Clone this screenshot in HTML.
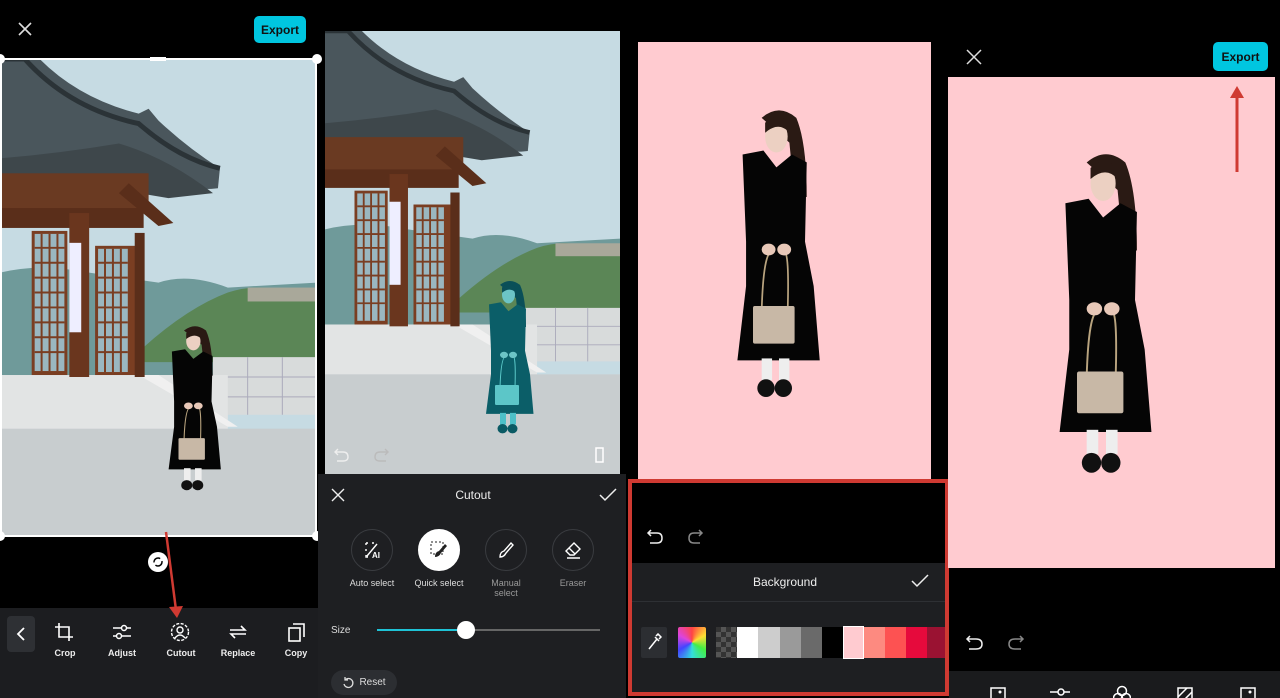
<!DOCTYPE html>
<html><head><meta charset="utf-8">
<style>
*{margin:0;padding:0;box-sizing:border-box}
body{width:1280px;height:698px;background:#000;position:relative;overflow:hidden;font-family:"Liberation Sans",sans-serif;color:#fff}
.a{position:absolute}
.btn{background:#00c6e0;color:#111;font-weight:bold;font-size:12px;border-radius:5px;display:flex;align-items:center;justify-content:center}
.lbl{font-size:9px;color:#ddd;text-align:center;width:70px}
.tb{font-size:9px;font-weight:bold;text-align:center;width:60px;color:#eee}
.circ{width:42px;height:42px;border-radius:50%;border:1px solid #3a3c40;display:flex;align-items:center;justify-content:center}
</style></head><body>
<svg width="0" height="0" style="position:absolute">
<defs>
<symbol id="scene" viewBox="0 0 320 480" preserveAspectRatio="none">
<rect width="320" height="480" fill="#c6dbe3"/>
<path d="M0 215 Q40 205 90 215 L160 225 Q190 215 230 230 L320 225 L320 320 L0 320Z" fill="#6f9a9a"/>
<path d="M145 290 Q190 250 230 235 Q260 225 290 235 L320 240 L320 305 L145 305Z" fill="#5b8656"/>
<rect x="250" y="230" width="70" height="14" fill="#a9a89a"/>
<rect x="215" y="300" width="105" height="58" fill="#d8dbdb"/>
<path d="M215 320 H320 M215 340 H320 M250 300 V358 M285 300 V358" stroke="#aab" stroke-width="1"/>
<rect x="0" y="318" width="230" height="58" fill="#e2e4e4"/>
<path d="M140 318 L230 370 L240 370 L160 318Z" fill="#f0f0f0"/>
<rect x="0" y="372" width="320" height="108" fill="#c8cdcf"/>
<path d="M0 0 L40 0 Q80 40 140 55 L150 50 L160 62 Q190 90 222 110 L220 130 Q180 135 140 110 L0 115Z" fill="#4a565c"/>
<path d="M0 0 L25 0 Q70 50 140 65 Q180 100 222 110" stroke="#2b3337" stroke-width="5" fill="none"/>
<path d="M0 100 Q60 95 120 85 Q170 100 215 135 L170 140 L140 135 L0 130Z" fill="#3e474b"/>
<rect x="0" y="115" width="150" height="40" fill="#6a3a22"/>
<path d="M130 125 L175 165 L160 168 L120 135Z" fill="#5a2e1a"/>
<rect x="0" y="150" width="145" height="20" fill="#5a2e1a"/>
<rect x="32" y="173" width="36" height="145" fill="#7a3e22"/>
<rect x="35" y="176" width="30" height="138" fill="#9ab7c0"/>
<g stroke="#7a3e22" stroke-width="2"><path d="M35 190H65M35 205H65M35 220H65M35 235H65M35 250H65M35 265H65M35 280H65M35 295H65M42 176V314M50 176V314M58 176V314"/></g>
<rect x="70" y="155" width="20" height="165" fill="#6a361e"/>
<rect x="70" y="185" width="12" height="90" fill="#eef"/>
<rect x="96" y="188" width="44" height="130" fill="#7a3e22"/>
<rect x="99" y="191" width="30" height="124" fill="#9ab7c0"/>
<g stroke="#7a3e22" stroke-width="2"><path d="M99 205H129M99 220H129M99 235H129M99 250H129M99 265H129M99 280H129M99 295H129M106 191V315M114 191V315M122 191V315"/></g>
<rect x="136" y="175" width="10" height="145" fill="#5a2e1a"/>
</symbol>
<symbol id="girl" viewBox="0 0 120 300" preserveAspectRatio="none">
<path d="M40 15 Q60 0 80 15 Q92 40 92 95 L78 95 L72 40Z" fill="#2a1a14"/>
<ellipse cx="57" cy="34" rx="13" ry="16" fill="#ecd0c2"/>
<path d="M44 20 Q57 8 72 20 L72 30 Q60 18 44 30Z" fill="#2a1a14"/>
<path d="M18 52 L42 48 L57 65 L75 52 L92 60 L90 140 L100 185 L107 260 L12 260 L22 185 L22 140Z" fill="#050505"/>
<rect x="40" y="258" width="12" height="22" fill="#eee"/>
<rect x="60" y="258" width="12" height="22" fill="#eee"/>
<ellipse cx="45" cy="288" rx="10" ry="9" fill="#111"/>
<ellipse cx="65" cy="288" rx="10" ry="9" fill="#111"/>
<path d="M40 210 Q42 150 52 150 M66 150 Q72 150 70 210" stroke="#b9a47f" stroke-width="2" fill="none"/>
<rect x="30" y="205" width="48" height="38" rx="2" fill="#c8b8a6"/>
<ellipse cx="48" cy="148" rx="8" ry="6" fill="#e8c8b8"/>
<ellipse cx="66" cy="148" rx="8" ry="6" fill="#e8c8b8"/>
</symbol>
<symbol id="girlt" viewBox="0 0 120 300" preserveAspectRatio="none">
<path d="M40 15 Q60 0 80 15 Q92 40 92 95 L78 95 L72 40Z" fill="#0a4f58"/>
<ellipse cx="57" cy="34" rx="13" ry="16" fill="#6cc4c6"/>
<path d="M44 20 Q57 8 72 20 L72 30 Q60 18 44 30Z" fill="#0a4f58"/>
<path d="M18 52 L42 48 L57 65 L75 52 L92 60 L90 140 L100 185 L107 260 L12 260 L22 185 L22 140Z" fill="#0b5e68"/>
<rect x="40" y="258" width="12" height="22" fill="#4dc0c8"/>
<rect x="60" y="258" width="12" height="22" fill="#4dc0c8"/>
<ellipse cx="45" cy="288" rx="10" ry="9" fill="#0a5a64"/>
<ellipse cx="65" cy="288" rx="10" ry="9" fill="#0a5a64"/>
<path d="M40 210 Q42 150 52 150 M66 150 Q72 150 70 210" stroke="#5ccaca" stroke-width="2" fill="none"/>
<rect x="30" y="205" width="48" height="38" rx="2" fill="#5cc6c8"/>
<ellipse cx="48" cy="148" rx="8" ry="6" fill="#6cc4c6"/>
<ellipse cx="66" cy="148" rx="8" ry="6" fill="#6cc4c6"/>
</symbol>
</defs>
</svg>

<!-- Panel 1 -->
<svg class="a" style="left:16px;top:20px" width="18" height="18" viewBox="0 0 18 18"><path d="M3 3L15 15M15 3L3 15" stroke="#ddd" stroke-width="1.6"/></svg>
<div class="a btn" style="left:254px;top:16px;width:52px;height:27px">Export</div>
<svg class="a" style="left:0;top:59px" width="317" height="477"><use href="#scene" width="317" height="477"/><use href="#girl" x="162" y="263" width="66" height="170"/></svg>
<div class="a" style="left:0;top:58px;width:317px;height:479px;border:2px solid #fff"></div>
<div class="a" style="left:150px;top:57px;width:16px;height:4px;background:#fff"></div>
<div class="a" style="left:-5px;top:54px;width:10px;height:10px;border-radius:50%;background:#fff"></div>
<div class="a" style="left:312px;top:54px;width:10px;height:10px;border-radius:50%;background:#fff"></div>
<div class="a" style="left:-5px;top:531px;width:10px;height:10px;border-radius:50%;background:#fff"></div>
<div class="a" style="left:312px;top:531px;width:10px;height:10px;border-radius:50%;background:#fff"></div>
<div class="a" style="left:148px;top:552px;width:20px;height:20px;border-radius:50%;background:#fff"></div>
<svg class="a" style="left:151px;top:555px" width="14" height="14"><circle cx="7" cy="7" r="4" stroke="#000" stroke-width="1.5" fill="none" stroke-dasharray="9 3"/></svg>
<div class="a" style="left:0;top:608px;width:318px;height:90px;background:#1c1d20"></div>
<div class="a" style="left:7px;top:616px;width:28px;height:36px;background:#2e3034;border-radius:4px"></div>
<svg class="a" style="left:14px;top:626px" width="14" height="16"><path d="M10 2L4 8L10 14" stroke="#fff" stroke-width="1.8" fill="none"/></svg>
<svg class="a" style="left:55px;top:623px" width="18" height="18"><path d="M4 0V14H18M0 4H14V18" stroke="#fff" stroke-width="1.6" fill="none"/></svg>
<svg class="a" style="left:113px;top:623px" width="18" height="18"><path d="M0 5H18M0 13H18" stroke="#fff" stroke-width="1.5"/><circle cx="11" cy="5" r="2.5" fill="#1c1d20" stroke="#fff" stroke-width="1.5"/><circle cx="6" cy="13" r="2.5" fill="#1c1d20" stroke="#fff" stroke-width="1.5"/></svg>
<svg class="a" style="left:170px;top:622px" width="20" height="20"><circle cx="10" cy="10" r="8.5" stroke="#fff" stroke-width="1.4" fill="none" stroke-dasharray="3 1.5"/><circle cx="10" cy="8" r="3" stroke="#fff" stroke-width="1.4" fill="none"/><path d="M5 16Q10 10 15 16" stroke="#fff" stroke-width="1.4" fill="none"/></svg>
<svg class="a" style="left:229px;top:624px" width="18" height="16"><path d="M1 6H16L12 2M17 10H2L6 14" stroke="#fff" stroke-width="1.6" fill="none"/></svg>
<svg class="a" style="left:287px;top:622px" width="18" height="20"><rect x="2" y="6" width="11" height="13" stroke="#fff" stroke-width="1.6" fill="none"/><path d="M6 2H17V15" stroke="#fff" stroke-width="1.6" fill="none"/></svg>
<div class="a tb" style="left:35px;top:648px">Crop</div>
<div class="a tb" style="left:92px;top:648px">Adjust</div>
<div class="a tb" style="left:151px;top:648px">Cutout</div>
<div class="a tb" style="left:208px;top:648px">Replace</div>
<div class="a tb" style="left:266px;top:648px">Copy</div>
<svg class="a" style="left:160px;top:530px" width="30" height="90"><path d="M6 2L16 80" stroke="#d03a32" stroke-width="2.5"/><path d="M9 77L23 76L17 88Z" fill="#d03a32"/></svg>

<!-- Panel 2 -->
<svg class="a" style="left:325px;top:31px" width="295" height="443"><use href="#scene" width="295" height="443"/><use href="#girlt" x="155" y="246" width="60" height="158"/></svg>
<svg class="a" style="left:333px;top:447px" width="18" height="16"><path d="M5 2L2 5L5 8M2 5H10Q15 5 15 10Q15 14 10 14H4" stroke="#eee" stroke-width="1.4" fill="none"/></svg>
<svg class="a" style="left:372px;top:447px" width="18" height="16"><path d="M13 2L16 5L13 8M16 5H8Q3 5 3 10Q3 14 8 14H14" stroke="#bbb" stroke-width="1.4" fill="none"/></svg>
<svg class="a" style="left:594px;top:446px" width="18" height="18"><rect x="2" y="2" width="7" height="14" stroke="#fff" stroke-width="1.5" fill="none"/><path d="M13 2V16" stroke="#ccc" stroke-dasharray="2 2"/></svg>
<div class="a" style="left:318px;top:474px;width:308px;height:224px;background:#1e1f22"></div>
<svg class="a" style="left:331px;top:488px" width="14" height="14"><path d="M1 1L13 13M13 1L1 13" stroke="#eee" stroke-width="1.4"/></svg>
<div class="a" style="left:440px;top:488px;width:66px;text-align:center;font-size:12px;color:#eee">Cutout</div>
<svg class="a" style="left:599px;top:488px" width="18" height="14"><path d="M1 7L6 12L17 1" stroke="#eee" stroke-width="1.5" fill="none"/></svg>
<div class="a circ" style="left:351px;top:529px"><svg width="20" height="20"><path d="M4 3H6M4 3V5M4 9V11M4 15V17H6M10 3H12M15 4L5 16" stroke="#fff" stroke-width="1.4" fill="none"/><text x="10" y="18" font-size="8" font-weight="bold" fill="#fff" font-family="Liberation Sans">AI</text></svg></div>
<div class="a circ" style="left:418px;top:529px;background:#fff;border-color:#fff"><svg width="20" height="20"><rect x="2" y="2" width="12" height="12" stroke="#222" stroke-dasharray="2 2" fill="none"/><path d="M6 17Q6 12 10 11L16 4L18 6L12 13Q10 17 6 17Z" fill="#222"/></svg></div>
<div class="a circ" style="left:485px;top:529px"><svg width="20" height="20"><path d="M4 17Q4 12 8 11L15 3L17 5L10 13Q8 17 4 17Z" stroke="#fff" stroke-width="1.4" fill="none"/></svg></div>
<div class="a circ" style="left:552px;top:529px"><svg width="20" height="20"><path d="M3 11L11 3L17 9L11 15H7Z M6 8L12 14M4 18H17" stroke="#fff" stroke-width="1.4" fill="none"/></svg></div>
<div class="a lbl" style="left:337px;top:578px">Auto select</div>
<div class="a lbl" style="left:404px;top:578px">Quick select</div>
<div class="a lbl" style="left:471px;top:578px;color:#999">Manual<br>select</div>
<div class="a lbl" style="left:538px;top:578px;color:#999">Eraser</div>
<div class="a" style="left:331px;top:625px;font-size:10px;color:#ddd">Size</div>
<div class="a" style="left:377px;top:629px;width:223px;height:2px;background:#666"></div>
<div class="a" style="left:377px;top:629px;width:89px;height:2px;background:#1fc2d6"></div>
<div class="a" style="left:457px;top:621px;width:18px;height:18px;border-radius:50%;background:#fff"></div>
<div class="a" style="left:331px;top:670px;width:66px;height:25px;border-radius:13px;background:#2c2e32;font-size:10px;color:#ddd;display:flex;align-items:center;justify-content:center"><svg width="12" height="12" style="margin-right:5px"><path d="M3 3A4.5 4.5 0 1 1 2 7M3 0V3H6" stroke="#ddd" stroke-width="1.3" fill="none"/></svg>Reset</div>

<!-- Panel 3 -->
<div class="a" style="left:638px;top:42px;width:293px;height:440px;background:#ffcbd0"></div>
<svg class="a" style="left:727px;top:103px" width="104" height="297"><use href="#girl" width="104" height="297"/></svg>
<div class="a" style="left:628px;top:479px;width:321px;height:217px;border:4px solid #cf3a32;background:#000"></div>
<div class="a" style="left:632px;top:563px;width:313px;height:129px;background:#1e1f22"></div>
<div class="a" style="left:632px;top:601px;width:313px;height:1px;background:#2e3034"></div>
<svg class="a" style="left:646px;top:528px" width="20" height="18"><path d="M5 2L2 5L5 8M2 5H11Q16 5 16 10Q16 15 11 15H4" stroke="#eee" stroke-width="1.5" fill="none"/></svg>
<svg class="a" style="left:686px;top:528px" width="20" height="18"><path d="M13 2L16 5L13 8M16 5H8Q3 5 3 10Q3 15 8 15H14" stroke="#888" stroke-width="1.5" fill="none"/></svg>
<div class="a" style="left:740px;top:575px;width:90px;text-align:center;font-size:12px;color:#eee">Background</div>
<svg class="a" style="left:911px;top:574px" width="18" height="14"><path d="M1 7L6 12L17 1" stroke="#eee" stroke-width="1.5" fill="none"/></svg>
<div class="a" style="left:641px;top:627px;width:26px;height:31px;background:#2c2e32;border-radius:2px"></div>
<svg class="a" style="left:646px;top:633px" width="16" height="18"><path d="M3 16L11 6M9 4L13 8M10 3L12 1L15 4L13 6" stroke="#fff" stroke-width="1.5" fill="none"/></svg>
<div class="a" style="left:678px;top:627px;width:28px;height:31px;background:conic-gradient(from 0deg,#f44 ,#fd3,#4e4,#3dd,#44f,#d4d,#f44);border-radius:2px"></div>
<div class="a" style="left:716px;top:627px;width:21px;height:31px;background:repeating-conic-gradient(#555 0 25%,#333 0 50%) 0 0/10px 10px"></div>
<div class="a" style="left:737px;top:627px;width:21px;height:31px;background:#fff"></div>
<div class="a" style="left:758px;top:627px;width:22px;height:31px;background:#cdcdcd"></div>
<div class="a" style="left:780px;top:627px;width:21px;height:31px;background:#9a9a9a"></div>
<div class="a" style="left:801px;top:627px;width:21px;height:31px;background:#6a6a6a"></div>
<div class="a" style="left:822px;top:627px;width:21px;height:31px;background:#000"></div>
<div class="a" style="left:843px;top:626px;width:21px;height:33px;background:#ffcbd0;border:1px solid #fff"></div>
<div class="a" style="left:864px;top:627px;width:21px;height:31px;background:#fd8a80"></div>
<div class="a" style="left:885px;top:627px;width:21px;height:31px;background:#fd5252"></div>
<div class="a" style="left:906px;top:627px;width:21px;height:31px;background:#e60a3c"></div>
<div class="a" style="left:927px;top:627px;width:18px;height:31px;background:#9a1232"></div>

<!-- Panel 4 -->
<svg class="a" style="left:966px;top:49px" width="16" height="16"><path d="M1 1L15 15M15 1L1 15" stroke="#ddd" stroke-width="1.5"/></svg>
<div class="a btn" style="left:1213px;top:42px;width:55px;height:29px">Export</div>
<div class="a" style="left:948px;top:77px;width:327px;height:491px;background:#ffcbd0"></div>
<svg class="a" style="left:1048px;top:146px" width="116" height="330"><use href="#girl" width="116" height="330"/></svg>
<svg class="a" style="left:1228px;top:84px" width="18" height="92"><path d="M9 12V88" stroke="#cf3a32" stroke-width="3"/><path d="M2 14L9 2L16 14Z" fill="#cf3a32"/></svg>
<svg class="a" style="left:965px;top:634px" width="22" height="18"><path d="M5 2L2 5L5 8M2 5H11Q17 5 17 10Q17 15 11 15H4" stroke="#eee" stroke-width="1.5" fill="none"/></svg>
<svg class="a" style="left:1006px;top:634px" width="22" height="18"><path d="M14 2L17 5L14 8M17 5H9Q3 5 3 10Q3 15 9 15H15" stroke="#888" stroke-width="1.5" fill="none"/></svg>
<div class="a" style="left:949px;top:671px;width:331px;height:27px;background:#1a1b1d"></div>
<svg class="a" style="left:990px;top:687px" width="16" height="11"><rect x="1" y="1" width="14" height="14" stroke="#fff" stroke-width="1.5" fill="none"/><circle cx="10" cy="5" r="1.5" fill="#fff"/></svg>
<svg class="a" style="left:1050px;top:687px" width="20" height="11"><path d="M0 5H20" stroke="#fff" stroke-width="1.5"/><circle cx="11" cy="5" r="3" fill="#1a1b1d" stroke="#fff" stroke-width="1.5"/></svg>
<svg class="a" style="left:1113px;top:685px" width="18" height="13"><circle cx="9" cy="6" r="4.5" stroke="#fff" stroke-width="1.5" fill="none"/><circle cx="5" cy="13" r="4.5" stroke="#fff" stroke-width="1.5" fill="none"/><circle cx="13" cy="13" r="4.5" stroke="#fff" stroke-width="1.5" fill="none"/></svg>
<svg class="a" style="left:1177px;top:687px" width="16" height="11"><rect x="1" y="1" width="14" height="14" stroke="#fff" stroke-width="1.5" fill="none"/><path d="M1 10L10 1M5 15L15 5" stroke="#fff" stroke-width="1.5"/></svg>
<svg class="a" style="left:1240px;top:687px" width="16" height="11"><rect x="1" y="1" width="14" height="14" stroke="#fff" stroke-width="1.5" fill="none"/><circle cx="10" cy="5" r="1.5" fill="#fff"/></svg>
</body></html>
